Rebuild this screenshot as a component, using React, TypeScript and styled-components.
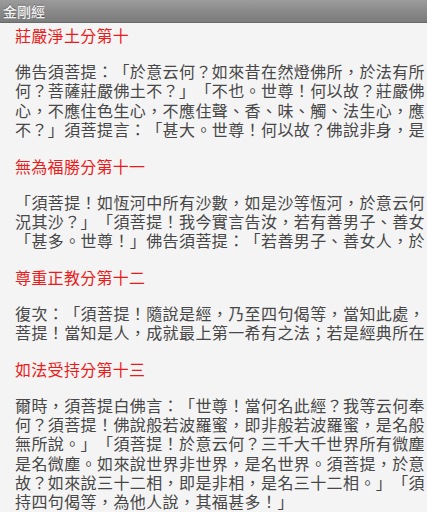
import React from "react";
import styled, { createGlobalStyle } from "styled-components";

const GlobalStyle = createGlobalStyle`
  html, body {
    margin: 0;
    padding: 0;
    background: #f4f4f4;
  }
  body {
    font-family: "Noto Sans CJK TC", "Noto Sans", sans-serif;
  }
`;

const Page = styled.div`
  width: 427px;
  height: 512px;
  overflow: hidden;
  background: #f4f4f4;
`;

const TitleBar = styled.div`
  height: 23px;
  display: flex;
  align-items: center;
  padding-left: 3px;
  background: linear-gradient(to bottom, #9c9c9c 0%, #8a8a8a 50%, #7b7b7b 100%);
  border-bottom: 1px solid #6a6a6a;
  box-sizing: border-box;
`;

const Title = styled.span`
  color: #f2f2f2;
  font-size: 14px;
  font-weight: 500;
  text-shadow: 0 -1px 0 rgba(0, 0, 0, 0.35);
`;

const Content = styled.div`
  padding: 2px 0 0 15px;
`;

const Section = styled.section`
  margin-bottom: 16px;
`;

const Heading = styled.h2`
  margin: 0 0 17px;
  height: 20px;
  line-height: 20px;
  font-size: 16px;
  font-weight: normal;
  color: #ec1b1b;
  letter-spacing: 0.3px;
`;

const Paragraph = styled.div`
  color: #474747;
  font-size: 16px;
  line-height: 19.4px;
  letter-spacing: 0.4px;
  text-spacing-trim: space-all;
`;

const Line = styled.div`
  white-space: nowrap;
  height: 19.4px;
`;

const sections = [
  {
    title: "莊嚴淨土分第十",
    lines: [
      "佛告須菩提：「於意云何？如來昔在然燈佛所，於法有所",
      "何？菩薩莊嚴佛土不？」「不也。世尊！何以故？莊嚴佛",
      "心，不應住色生心，不應住聲、香、味、觸、法生心，應",
      "不？」須菩提言：「甚大。世尊！何以故？佛說非身，是",
    ],
  },
  {
    title: "無為福勝分第十一",
    lines: [
      "「須菩提！如恆河中所有沙數，如是沙等恆河，於意云何",
      "況其沙？」「須菩提！我今實言告汝，若有善男子、善女",
      "「甚多。世尊！」佛告須菩提：「若善男子、善女人，於",
    ],
  },
  {
    title: "尊重正教分第十二",
    lines: [
      "復次：「須菩提！隨說是經，乃至四句偈等，當知此處，",
      "菩提！當知是人，成就最上第一希有之法；若是經典所在",
    ],
  },
  {
    title: "如法受持分第十三",
    lines: [
      "爾時，須菩提白佛言：「世尊！當何名此經？我等云何奉",
      "何？須菩提！佛說般若波羅蜜，即非般若波羅蜜，是名般",
      "無所說。」「須菩提！於意云何？三千大千世界所有微塵",
      "是名微塵。如來說世界非世界，是名世界。須菩提，於意",
      "故？如來說三十二相，即是非相，是名三十二相。」「須",
      "持四句偈等，為他人說，其福甚多！」",
    ],
  },
];

export default function App() {
  return (
    <Page>
      <GlobalStyle />
      <TitleBar>
        <Title>金剛經</Title>
      </TitleBar>
      <Content>
        {sections.map((s) => (
          <Section key={s.title}>
            <Heading>{s.title}</Heading>
            <Paragraph>
              {s.lines.map((l, i) => (
                <Line key={i}>{l}</Line>
              ))}
            </Paragraph>
          </Section>
        ))}
      </Content>
    </Page>
  );
}
